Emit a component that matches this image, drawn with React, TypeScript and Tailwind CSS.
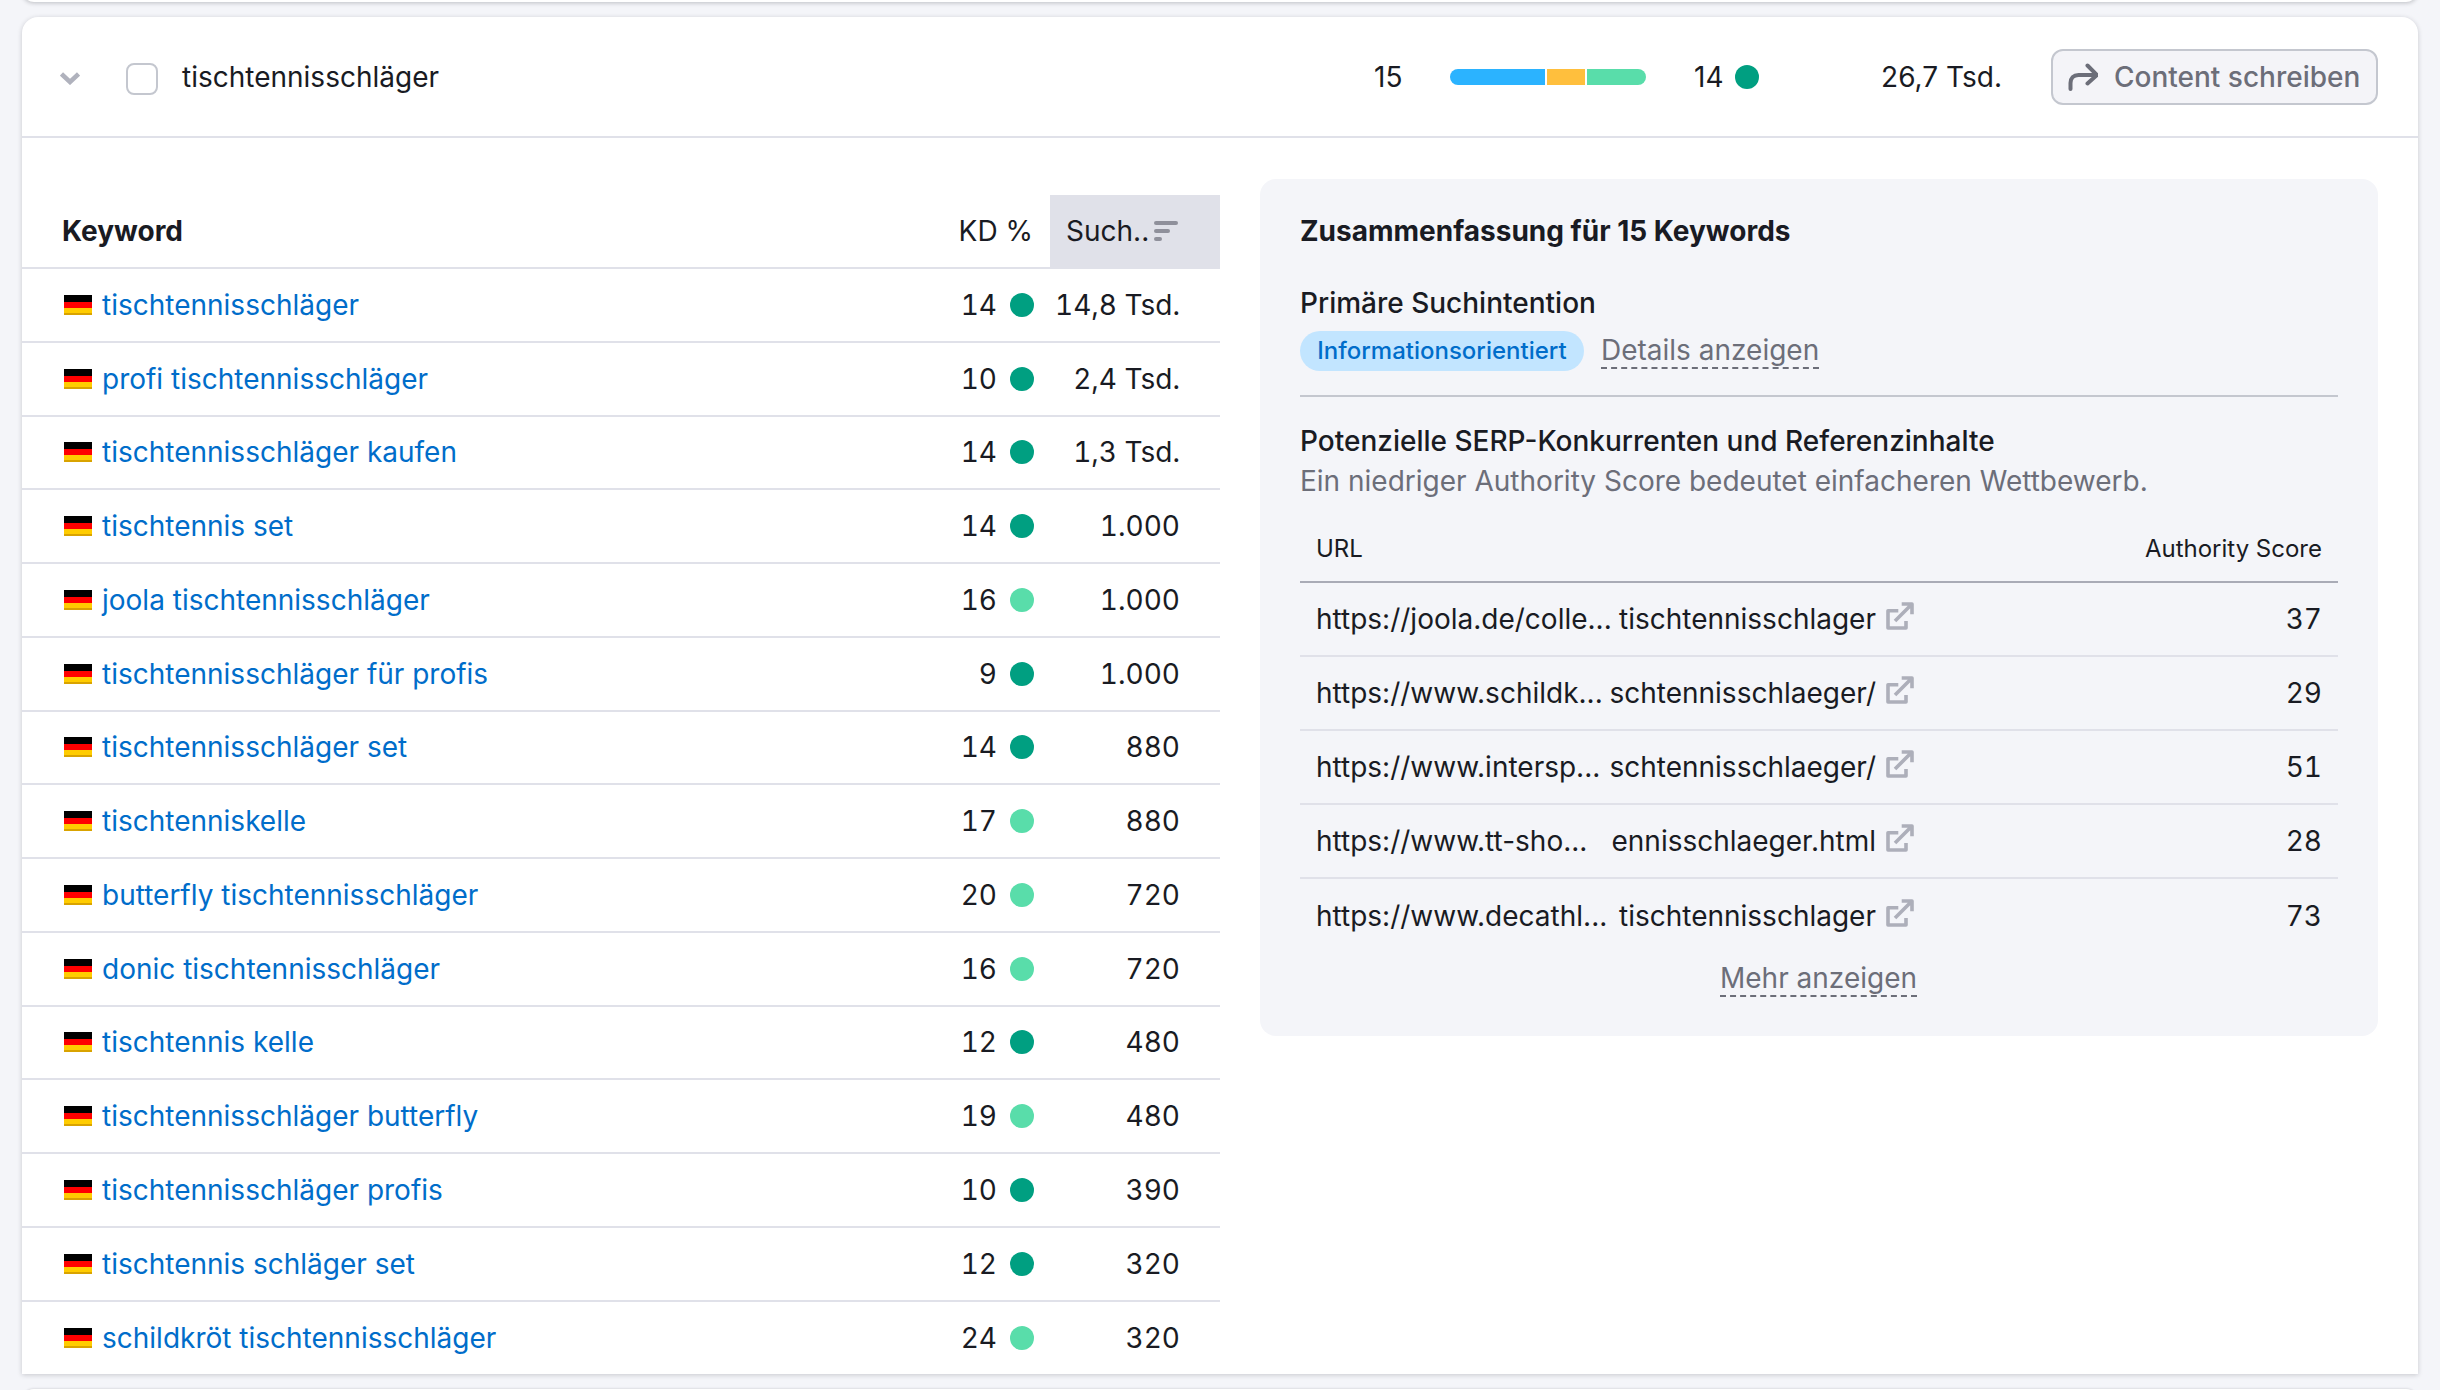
const KEYWORDS = [
  { kw: "tischtennisschläger", kd: 14, easy: false, vol: "14,8 Tsd." },
  { kw: "profi tischtennisschläger", kd: 10, easy: false, vol: "2,4 Tsd." },
  { kw: "tischtennisschläger kaufen", kd: 14, easy: false, vol: "1,3 Tsd." },
  { kw: "tischtennis set", kd: 14, easy: false, vol: "1.000" },
  { kw: "joola tischtennisschläger", kd: 16, easy: true, vol: "1.000" },
  { kw: "tischtennisschläger für profis", kd: 9, easy: false, vol: "1.000" },
  { kw: "tischtennisschläger set", kd: 14, easy: false, vol: "880" },
  { kw: "tischtenniskelle", kd: 17, easy: true, vol: "880" },
  { kw: "butterfly tischtennisschläger", kd: 20, easy: true, vol: "720" },
  { kw: "donic tischtennisschläger", kd: 16, easy: true, vol: "720" },
  { kw: "tischtennis kelle", kd: 12, easy: false, vol: "480" },
  { kw: "tischtennisschläger butterfly", kd: 19, easy: true, vol: "480" },
  { kw: "tischtennisschläger profis", kd: 10, easy: false, vol: "390" },
  { kw: "tischtennis schläger set", kd: 12, easy: false, vol: "320" },
  { kw: "schildkröt tischtennisschläger", kd: 24, easy: true, vol: "320" },
];

const URLS = [
  { start: "https://joola.de/colle...", end: "tischtennisschlager", score: 37 },
  { start: "https://www.schildk...", end: "schtennisschlaeger/", score: 29 },
  { start: "https://www.intersp...", end: "schtennisschlaeger/", score: 51 },
  { start: "https://www.tt-sho...", end: "ennisschlaeger.html", score: 28 },
  { start: "https://www.decathl...", end: "tischtennisschlager", score: 73 },
];

function Flag() {
  return (
    <span className="flex h-[20px] w-[28px] shrink-0 flex-col">
      <span className="h-[7px] bg-black" />
      <span className="h-[6px] bg-[#ff0000]" />
      <span className="h-[7px] border-b-2 border-[#d9a300] bg-[#ffcc00]" />
    </span>
  );
}

function Dot({ easy }: { easy: boolean }) {
  return <span className={`block h-[24px] w-[24px] rounded-full ${easy ? "bg-[#59ddaa]" : "bg-[#009f81]"}`} />;
}

function ExternalIcon() {
  return (
    <svg className="h-[28px] w-[28px] shrink-0 -translate-y-[3px] text-[#adafba]" viewBox="0 0 28 28" fill="none" stroke="currentColor" strokeWidth="3.6" strokeLinejoin="round">
      <path d="M12.3 8.7H2V26h18V19" />
      <path d="M9 19 26 2M15.7 2H26v10.3" />
    </svg>
  );
}

export default function App() {
  return (
    <div className="relative h-[1390px] w-[2440px] overflow-hidden bg-[#f4f5f9] [font-family:Inter,sans-serif] text-[28px] text-[#191b23]">
      {/* previous / next cards peeking in */}
      <div className="absolute left-[22px] top-[-20px] h-[22px] w-[2396px] rounded-b-xl bg-white shadow-[0_1px_4px_rgba(25,27,35,0.25)]" />
      <div className="absolute left-[22px] top-[1389px] h-[20px] w-[2396px] rounded-t-xl bg-white shadow-[0_-1px_2px_rgba(25,27,35,0.1)]" />

      <div className="absolute left-[22px] top-[17px] h-[1357px] w-[2396px] rounded-t-[16px] bg-white shadow-[0_1px_5px_rgba(25,27,35,0.2)]">
        {/* group header */}
        <div className="relative h-[121px] border-b-2 border-[#e0e1e9]">
          <svg className="absolute left-[38px] top-[55px] h-[13px] w-[20px] text-[#b0b2bd]" viewBox="0 0 20 13" fill="none" stroke="currentColor" strokeWidth="4.5">
            <path d="M1.5 2 10 10 18.5 2" />
          </svg>
          <span className="absolute left-[104px] top-[46px] h-[32px] w-[32px] rounded-[8px] border-2 border-[#c4c7cf] bg-white" />
          <span className="absolute left-[160px] top-[43px] leading-[34px]">tischtennisschläger</span>
          <span className="absolute left-[1352px] top-[43px] leading-[34px]">15</span>
          <div className="absolute left-[1428px] top-[52px] flex h-[16px] w-[196px] gap-[2px] overflow-hidden rounded-full">
            <span className="w-[96px] bg-[#2bb3ff]" />
            <span className="w-[38px] bg-[#ffbf3d]" />
            <span className="w-[60px] bg-[#59ddaa]" />
          </div>
          <span className="absolute left-[1672px] top-[43px] leading-[34px]">14</span>
          <span className="absolute left-[1713px] top-[48px]"><Dot easy={false} /></span>
          <span className="absolute right-[416px] top-[43px] leading-[34px]">26,7 Tsd.</span>
          <button className="absolute left-[2029px] top-[32px] flex h-[56px] w-[327px] items-center rounded-[12px] border-2 border-[#c4c7cf] bg-[#f4f4f8] pl-[15px] font-medium text-[#6c6e79]">
            <svg className="h-[28px] w-[30px] shrink-0" viewBox="0 0 30 28" fill="none" stroke="currentColor" strokeWidth="4" strokeLinecap="round" strokeLinejoin="round">
              <path d="M2.5 26v-6c0-5 3-8 8-8h18" />
              <path d="M19.5 2.5 29 12l-9.5 8.5" />
            </svg>
            <span className="ml-[16px] leading-[34px]">Content schreiben</span>
          </button>
        </div>

        {/* keyword table */}
        <div className="absolute left-0 top-[178px] w-[1198px]">
          <div className="flex h-[74px] items-center border-b-2 border-[#e0e1e9]">
            <span className="ml-[40px] font-bold">Keyword</span>
            <span className="ml-auto mr-[17px]">KD %</span>
            <div className="flex h-full w-[170px] items-center bg-[#e0e1e9] pl-[16px]">
              <span>Such..</span>
              <span className="ml-[5px] flex flex-col gap-[4px]">
                <span className="h-[4px] w-[24px] rounded-full bg-[#8f909b]" />
                <span className="h-[4px] w-[16px] rounded-full bg-[#8f909b]" />
                <span className="h-[4px] w-[8px] rounded-full bg-[#8f909b]" />
              </span>
            </div>
          </div>
          {KEYWORDS.map((k, i) => (
            <div key={k.kw} className={`flex h-[73.75px] items-center ${i < 14 ? "border-b-2 border-[#e0e1e9]" : ""}`}>
              <span className="ml-[42px]"><Flag /></span>
              <a className="ml-[10px] text-[#006dca]">{k.kw}</a>
              <span className="ml-auto tabular-nums">{k.kd}</span>
              <span className="ml-[13px] mr-[16px]"><Dot easy={k.easy} /></span>
              <span className="mr-[40px] w-[130px] whitespace-nowrap text-right tabular-nums">{k.vol}</span>
            </div>
          ))}
        </div>

        {/* summary panel */}
        <div className="absolute left-[1238px] top-[162px] h-[857px] w-[1118px] rounded-[16px] bg-[#f4f5f9] px-[40px]">
          <div className="absolute left-[40px] top-[35px] font-bold leading-[34px]">Zusammenfassung für 15 Keywords</div>
          <div className="absolute left-[40px] top-[107px] font-medium leading-[34px]">Primäre Suchintention</div>
          <div className="absolute left-[40px] top-[152px] flex items-center">
            <span className="flex h-[40px] w-[284px] items-center justify-center rounded-full bg-[#c2e5ff] text-[24px] font-medium text-[#006dca]">Informationsorientiert</span>
            <span className="ml-[17px] border-b-2 border-dashed border-[#6c6e79] leading-[34px] text-[#6c6e79]">Details anzeigen</span>
          </div>
          <div className="absolute left-[40px] top-[216px] h-[2px] w-[1038px] bg-[#c4c7cf]" />
          <div className="absolute left-[40px] top-[245px] font-medium leading-[34px]">Potenzielle SERP-Konkurrenten und Referenzinhalte</div>
          <div className="absolute left-[40px] top-[285px] leading-[34px] text-[#6c6e79]">Ein niedriger Authority Score bedeutet einfacheren Wettbewerb.</div>

          <div className="absolute left-[40px] top-[344px] w-[1038px]">
            <div className="flex h-[60px] items-center justify-between border-b-2 border-[#a9abb6] px-[16px] pb-[6px] text-[24px]">
              <span>URL</span>
              <span>Authority Score</span>
            </div>
            {URLS.map((u, i) => (
              <div key={u.start} className={`flex h-[73.9px] items-center px-[16px] ${i < 4 ? "border-b-2 border-[#e0e1e9]" : ""}`}>
                <span className="flex w-[560px] shrink-0 justify-between whitespace-nowrap">
                  <span>{u.start}</span>
                  <span>{u.end}</span>
                </span>
                <span className="ml-[10px]"><ExternalIcon /></span>
                <span className="ml-auto tabular-nums">{u.score}</span>
              </div>
            ))}
          </div>
          <div className="absolute left-[460px] top-[782px] border-b-2 border-dashed border-[#6c6e79] leading-[34px] text-[#6c6e79]">Mehr anzeigen</div>
        </div>
      </div>
    </div>
  );
}
